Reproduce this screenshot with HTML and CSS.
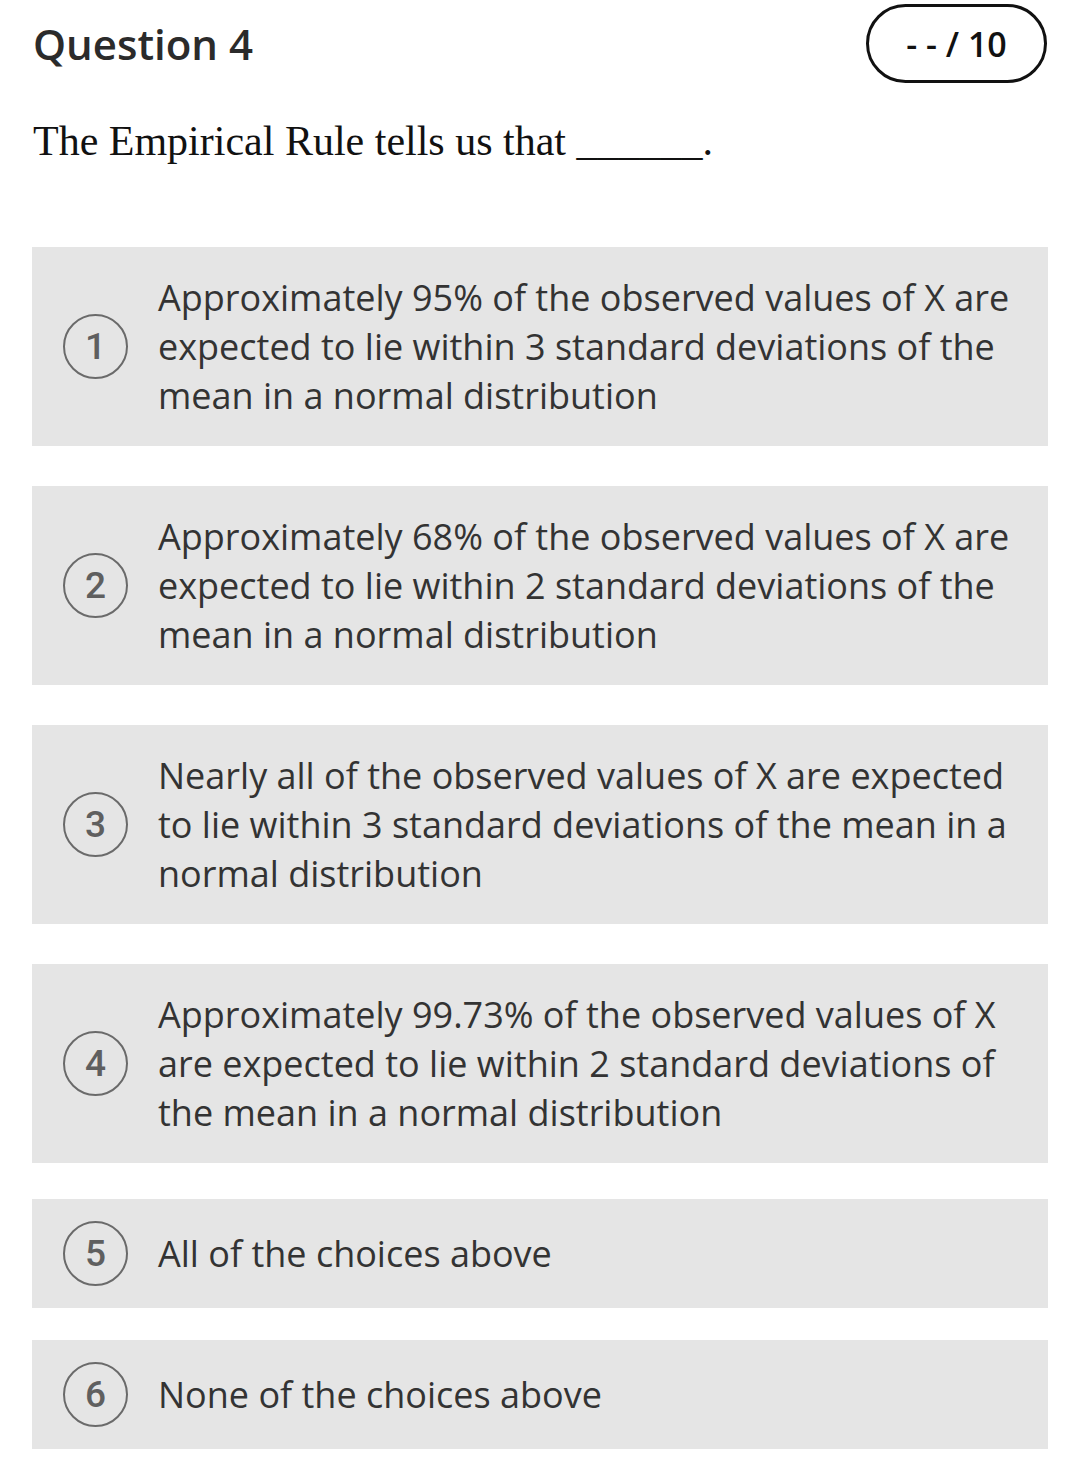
FILE: index.html
```html
<!DOCTYPE html>
<html>

<head>
    <meta charset="utf-8" />
    <title>Question 4</title>
    <link rel="stylesheet" href="styles.css">
</head>

<body>
    <header class="q-header">
        <h1 class="q-title">Question 4</h1>
        <div class="q-score">- - / 10</div>
    </header>
    <p class="q-text">The Empirical Rule tells us that ______.</p>
    <div class="options">
        <div class="option">
            <span class="num">1</span>
            <span class="label">Approximately 95% of the observed values of X are expected to lie within 3 standard deviations of the mean in a normal distribution</span>
        </div>
        <div class="option">
            <span class="num">2</span>
            <span class="label">Approximately 68% of the observed values of X are expected to lie within 2 standard deviations of the mean in a normal distribution</span>
        </div>
        <div class="option">
            <span class="num">3</span>
            <span class="label">Nearly all of the observed values of X are expected to lie within 3 standard deviations of the mean in a normal distribution</span>
        </div>
        <div class="option">
            <span class="num">4</span>
            <span class="label">Approximately 99.73% of the observed values of X are expected to lie within 2 standard deviations of the mean in a normal distribution</span>
        </div>
        <div class="option short">
            <span class="num">5</span>
            <span class="label">All of the choices above</span>
        </div>
        <div class="option short">
            <span class="num">6</span>
            <span class="label">None of the choices above</span>
        </div>
    </div>
</body>

</html>
```

FILE: styles.css
```css
body {
    margin: 0;
    padding: 0 32px 0 32px;
    background: #fff;
    font-family: "Open Sans", sans-serif;
    color: #333;
}

.q-header {
    display: flex;
    justify-content: space-between;
    align-items: flex-start;
    padding-top: 4px;
}

.q-title {
    margin: 15px 0 0 1px;
    font-size: 42px;
    font-weight: 600;
    line-height: 50px;
    color: #2b2b2b;
}

.q-score {
    width: 181px;
    height: 79px;
    box-sizing: border-box;
    border: 3px solid #111;
    border-radius: 40px;
    display: flex;
    align-items: center;
    justify-content: center;
    font-size: 34px;
    font-weight: 600;
    color: #111;
    margin-right: 1px;
}

.q-text {
    margin: 30px 0 0 1px;
    font-family: "Liberation Serif", serif;
    font-size: 42px;
    line-height: 56px;
    color: #111;
}

.options {
    margin-top: 78px;
    display: flex;
    flex-direction: column;
    gap: 40px;
}

.option {
    display: flex;
    align-items: center;
    min-height: 109px;
    box-sizing: border-box;
    padding: 26px 30px 26px 31px;
    background: #e5e5e5;
}

.option.short {
    padding-top: 0;
    padding-bottom: 0;
    margin-top: -4px;
}

.option.short + .option.short {
    margin-top: -8px;
}

.num {
    flex: none;
    width: 65px;
    height: 65px;
    box-sizing: border-box;
    border: 2px solid #6a6a6a;
    border-radius: 50%;
    display: flex;
    align-items: center;
    justify-content: center;
    font-family: Roboto, sans-serif;
    font-size: 37px;
    font-weight: 500;
    color: #5f5f5f;
    margin-right: 30px;
}

.label {
    font-size: 36px;
    line-height: 49px;
    color: #333;
}
```
